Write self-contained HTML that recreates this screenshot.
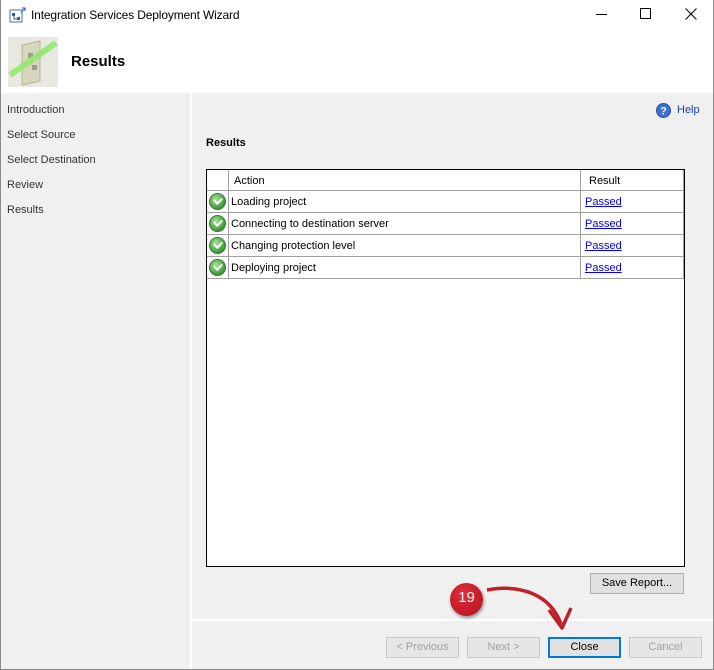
<!DOCTYPE html>
<html><head><style>
*{margin:0;padding:0;box-sizing:border-box}
body{width:714px;height:670px;position:relative;background:#f0f0f0;font-family:"Liberation Sans",Arial,sans-serif;font-size:11px;color:#000;overflow:hidden}
.win{position:absolute;left:0;top:0;width:714px;height:670px;border:1px solid #8a8a8a;border-top:none}
.abs{position:absolute}
.title{left:0;top:0;width:714px;height:30px;background:#fff}
.hdr{left:1px;top:30px;width:712px;height:63px;background:#fff}
.nav div{position:absolute;left:7px;color:#333}
.row{position:absolute;left:0;width:477px;height:22px;border-bottom:1px solid #a0a0a0}
.row span{position:absolute;top:5px}
.row a{position:absolute;left:378px;top:5px;color:#0000ee;text-decoration:underline}
.ck{position:absolute;left:2px;top:2px;width:17px;height:17px;border-radius:50%;background:radial-gradient(circle at 40% 35%,#a8e09a,#3f9a3a 70%,#2d7a2a);border:1px solid #3a7a35}
.ck:after{content:"";position:absolute;left:4px;top:3px;width:6px;height:4px;border-left:2px solid #fff;border-bottom:2px solid #fff;transform:rotate(-45deg)}
.btn{position:absolute;height:21px;border:1px solid #adadad;background:#e1e1e1;text-align:center;line-height:19px;color:#000}
.dis{color:#a0a0a0;border-color:#c8c8c8;background:#e6e6e6}
</style></head><body>
<div class="abs title"></div>
<svg class="abs" style="left:9px;top:7px" width="18" height="16"><rect x="1" y="3" width="12" height="12" fill="#fff" stroke="#4a6fa5"/><rect x="3" y="6" width="3" height="3" fill="#3a5a9a"/><rect x="8" y="10" width="3" height="3" fill="#3a5a9a"/><path d="M5 9v3h3" stroke="#3a5a9a" fill="none"/><path d="M12 6l4-5M13 1h3v3" stroke="#2a5ab0" fill="none"/></svg>
<div class="abs" style="left:31px;top:8px;font-size:12px;letter-spacing:-0.15px">Integration Services Deployment Wizard</div>
<div class="abs" style="left:596px;top:14px;width:11px;height:1px;background:#000"></div>
<div class="abs" style="left:640px;top:8px;width:11px;height:11px;border:1px solid #000"></div>
<svg class="abs" style="left:685px;top:8px" width="12" height="12"><path d="M0.5 0.5L11.5 11.5M11.5 0.5L0.5 11.5" stroke="#000"/></svg>
<div class="abs hdr"></div>
<svg class="abs" style="left:8px;top:37px" width="50" height="50"><rect x="0" y="0" width="50" height="50" fill="#e8e8e0"/><path d="M14 8l18-4v40l-18 4z" fill="#d9d6c0" stroke="#b8b49a"/><rect x="20" y="16" width="5" height="5" fill="#a09c80"/><rect x="24" y="28" width="5" height="5" fill="#a09c80"/><path d="M2 38L48 6" stroke="#8ee86a" stroke-width="6" opacity=".85"/></svg>
<div class="abs" style="left:71px;top:53px;font-size:15px;font-weight:bold">Results</div>
<div class="abs" style="left:190px;top:93px;width:2px;height:577px;background:#fff"></div>
<div class="abs" style="left:192px;top:619px;width:522px;height:2px;background:#fff"></div>
<div class="nav">
<div style="top:104px">Introduction</div>
<div style="top:129px">Select Source</div>
<div style="top:154px">Select Destination</div>
<div style="top:179px">Review</div>
<div style="top:204px">Results</div>
</div>
<svg class="abs" style="left:656px;top:103px" width="15" height="15"><circle cx="7.5" cy="7.5" r="7" fill="#3d6fd0" stroke="#2a4fa0"/><text x="7.5" y="11.5" font-size="11" font-weight="bold" fill="#fff" text-anchor="middle" font-family="Liberation Sans">?</text></svg>
<div class="abs" style="left:677px;top:104px;color:#1a3fb0">Help</div>
<div class="abs" style="left:206px;top:137px;font-weight:bold">Results</div>
<div class="abs" style="left:206px;top:169px;width:479px;height:398px;border:1px solid #000;background:#fff">
<div class="row" style="top:0;height:21px"><span style="left:27px;top:5px">Action</span><span style="left:382px;top:5px">Result</span></div>
<div class="row" style="top:21px"><div class="ck"></div><span style="left:24px">Loading project</span><a>Passed</a></div>
<div class="row" style="top:43px"><div class="ck"></div><span style="left:24px">Connecting to destination server</span><a>Passed</a></div>
<div class="row" style="top:65px"><div class="ck"></div><span style="left:24px">Changing protection level</span><a>Passed</a></div>
<div class="row" style="top:87px"><div class="ck"></div><span style="left:24px">Deploying project</span><a>Passed</a></div>
<div class="abs" style="left:21px;top:0;width:1px;height:109px;background:#a0a0a0"></div>
<div class="abs" style="left:373px;top:0;width:1px;height:109px;background:#a0a0a0"></div>
<div class="abs" style="left:476px;top:0;width:1px;height:109px;background:#a0a0a0"></div>
</div>
<div class="btn" style="left:590px;top:573px;width:94px;height:21px">Save Report...</div>
<div class="btn dis" style="left:386px;top:637px;width:73px">&lt; Previous</div>
<div class="btn dis" style="left:467px;top:637px;width:73px">Next &gt;</div>
<div class="btn" style="left:548px;top:637px;width:73px;border:2px solid #0078d7;line-height:17px">Close</div>
<div class="btn dis" style="left:629px;top:637px;width:73px">Cancel</div>
<svg class="abs" style="left:440px;top:578px" width="140" height="60"><path d="M47 12C80 6 110 16 121 46" stroke="#c0202a" stroke-width="3.5" fill="none"/><path d="M109 32L122 50L131 30" stroke="#c0202a" stroke-width="3.5" fill="none" stroke-linejoin="round"/></svg>
<div class="abs" style="left:450px;top:583px;width:33px;height:33px;border-radius:50%;background:radial-gradient(circle at 40% 35%,#e0303a,#b0101c);box-shadow:1px 2px 3px rgba(0,0,0,.4);color:#fff;font-size:15px;text-align:center;line-height:30px">19</div>
<div class="win"></div>
</body></html>
